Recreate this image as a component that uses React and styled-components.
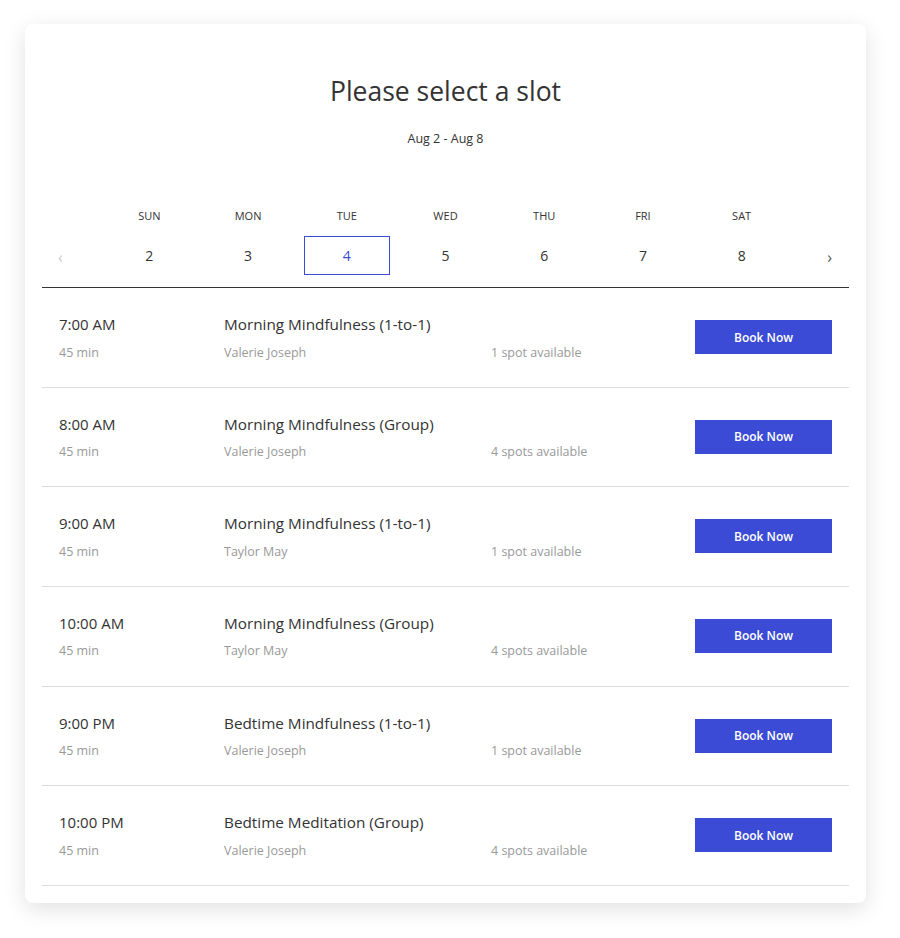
import React from "react";
import styled, { createGlobalStyle } from "styled-components";

const GlobalStyle = createGlobalStyle`
  body {
    margin: 0;
    background: #fff;
    font-family: "Open Sans", "Noto Sans", sans-serif;
    color: #333;
  }
`;

const days = [
  { name: "SUN", num: 2 },
  { name: "MON", num: 3 },
  { name: "TUE", num: 4 },
  { name: "WED", num: 5 },
  { name: "THU", num: 6 },
  { name: "FRI", num: 7 },
  { name: "SAT", num: 8 },
];

const slots = [
  { time: "7:00 AM", title: "Morning Mindfulness (1-to-1)", host: "Valerie Joseph", spots: "1 spot available" },
  { time: "8:00 AM", title: "Morning Mindfulness (Group)", host: "Valerie Joseph", spots: "4 spots available" },
  { time: "9:00 AM", title: "Morning Mindfulness (1-to-1)", host: "Taylor May", spots: "1 spot available" },
  { time: "10:00 AM", title: "Morning Mindfulness (Group)", host: "Taylor May", spots: "4 spots available" },
  { time: "9:00 PM", title: "Bedtime Mindfulness (1-to-1)", host: "Valerie Joseph", spots: "1 spot available" },
  { time: "10:00 PM", title: "Bedtime Meditation (Group)", host: "Valerie Joseph", spots: "4 spots available" },
];

const App = () => {
  return (
    <Page>
      <GlobalStyle />
      <Card>
        <Title>Please select a slot</Title>
        <Range>Aug 2 - Aug 8</Range>

        <Week>
          <span />
          {days.map((d) => (
            <DayName key={d.name}>{d.name}</DayName>
          ))}
          <span />
          <Arrow side="left" faded>‹</Arrow>
          {days.map((d) => (
            <DayCell key={d.num}>
              <DayNum selected={d.num === 4}>{d.num}</DayNum>
            </DayCell>
          ))}
          <Arrow side="right">›</Arrow>
        </Week>

        <List>
          {slots.map((s, i) => (
            <Row key={i}>
              <Time>{s.time}</Time>
              <Name>{s.title}</Name>
              <span />
              <BookButton>Book Now</BookButton>
              <Sub>45 min</Sub>
              <Sub>{s.host}</Sub>
              <Sub>{s.spots}</Sub>
            </Row>
          ))}
        </List>
      </Card>
    </Page>
  );
};

export default App;

const Page = styled.div`
  padding: 24px 34px 35px 25px;
`;

const Card = styled.div`
  background: #fff;
  border-radius: 8px;
  box-shadow: 0 6px 22px rgba(0, 0, 0, 0.12);
  padding: 0 17px 17px;
`;

const Title = styled.h1`
  margin: 0;
  padding-top: 50px;
  text-align: center;
  font-size: 26.5px;
  font-weight: 400;
  line-height: 34px;
  color: #333;
`;

const Range = styled.div`
  margin-top: 22px;
  text-align: center;
  font-size: 12.5px;
  line-height: 18px;
  color: #333;
`;

const Week = styled.div`
  margin-top: 58px;
  display: grid;
  grid-template-columns: 58px repeat(7, 1fr) 58px;
  grid-template-rows: 18px 39px;
  row-gap: 12px;
  align-items: center;
  padding-bottom: 12px;
  border-bottom: 1px solid #333;
`;

const DayName = styled.div`
  text-align: center;
  font-size: 11px;
  color: #333;
`;

const Arrow = styled.div`
  justify-self: ${(p) => (p.side === "left" ? "start" : "end")};
  margin: ${(p) => (p.side === "left" ? "0 0 0 16px" : "0 17px 0 0")};
  font-size: 16px;
  line-height: 39px;
  padding-top: 4px;
  color: ${(p) => (p.faded ? "#ccc" : "#555")};
`;

const DayCell = styled.div`
  display: flex;
  justify-content: center;
`;

const DayNum = styled.div`
  width: 86px;
  height: 39px;
  box-sizing: border-box;
  display: flex;
  align-items: center;
  justify-content: center;
  font-size: 14px;
  color: ${(p) => (p.selected ? "#3b4bd5" : "#333")};
  border: 1px solid ${(p) => (p.selected ? "#3b4bd5" : "transparent")};
`;

const List = styled.div`
  display: flex;
  flex-direction: column;
`;

const Row = styled.div`
  display: grid;
  grid-template-columns: 165px 267px 1fr 137px;
  grid-template-rows: 28px 28px;
  align-items: center;
  padding: 22px 17px 0 17px;
  height: 76.67px;
  border-bottom: 1px solid #ddd;
`;

const Time = styled.div`
  font-size: 15px;
  color: #333;
`;

const Name = styled.div`
  font-size: 15.3px;
  color: #333;
`;

const Sub = styled.div`
  font-size: 12.5px;
  color: #999;
`;

const BookButton = styled.button`
  grid-row: 1 / span 2;
  grid-column: 4;
  align-self: center;
  margin-top: -2px;
  height: 34px;
  width: 137px;
  border: none;
  background: #3b4bd5;
  color: #fff;
  font-family: inherit;
  font-size: 12px;
  font-weight: 600;
  cursor: pointer;
`;
